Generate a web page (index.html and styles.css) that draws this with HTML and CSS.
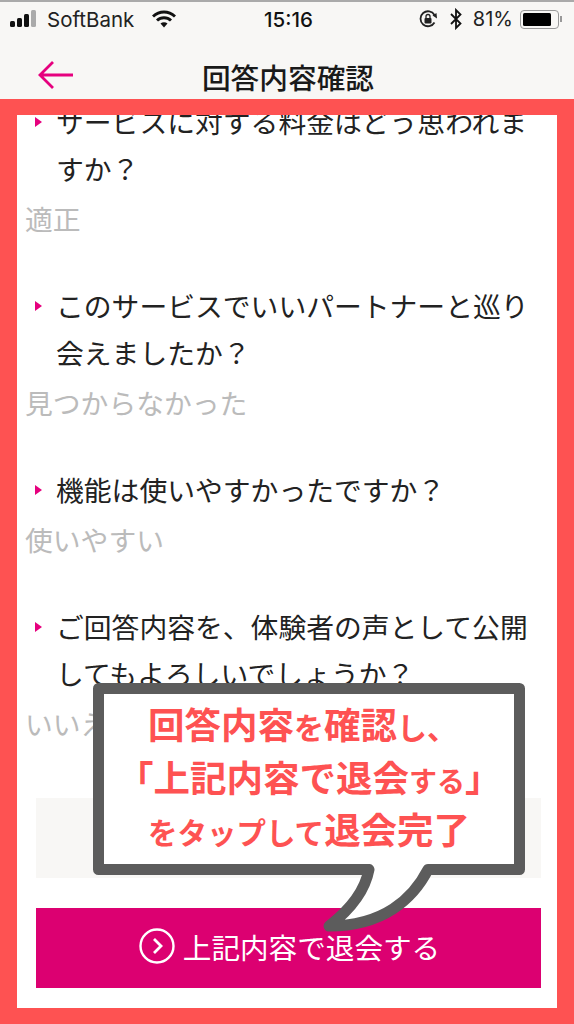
FILE: index.html
```html
<!DOCTYPE html>
<html lang="ja">
<head>
<meta charset="utf-8">
<title>回答内容確認</title>
<link rel="stylesheet" href="styles.css">
</head>
<body>
<div class="page">
  <div class="status">
    <div class="status-left">
      <svg class="signal" viewBox="0 0 28 20" width="28" height="20"><rect x="0" y="12" width="5" height="6" rx="1.5" fill="#111"/><rect x="7" y="9" width="5" height="9" rx="1.5" fill="#111"/><rect x="14" y="5" width="5" height="13" rx="1.5" fill="#111"/><rect x="21" y="1" width="5" height="17" rx="1.5" fill="#aaa"/></svg>
      <span class="carrier">SoftBank</span>
      <svg class="wifi" viewBox="0 0 24 18" width="24" height="18"><path d="M1 6.5C7.5 .5 16.500 .5 23 6.500" fill="none" stroke="#111" stroke-width="3"/><path d="M5 10.500C9 6.800 15 6.800 19 10.500" fill="none" stroke="#111" stroke-width="3"/><path d="M8.500 13.500 12 17.500 15.500 13.500C13.500 11.800 10.500 11.800 8.500 13.500Z" fill="#111"/></svg>
    </div>
    <span class="time">15:16</span>
    <div class="status-right">
      <svg class="lock" viewBox="0 0 20 20" width="20" height="20"><path d="M16.500 13.500A7.500 7.500 0 1 1 16.500 6" fill="none" stroke="#222" stroke-width="1.800"/><path d="M14.500 6.500 19 9.500 18.500 4Z" fill="#222"/><rect x="6.500" y="9" width="7" height="5.500" rx="1" fill="#222"/><path d="M8 9.500V7.500a2 2 0 0 1 4 0V9.500" fill="none" stroke="#222" stroke-width="1.300"/></svg>
      <svg class="bt" viewBox="0 0 14 22" width="14" height="22"><path d="M2 6 11.500 15.500 7 20V2L11.500 6.500 2 16" fill="none" stroke="#111" stroke-width="1.800"/></svg>
      <span class="pct">81%</span>
      <div class="battery"><div class="battery-fill"></div></div>
      <div class="battery-cap"></div>
    </div>
  </div>
  <header class="nav">
    <svg class="back" viewBox="0 0 36 30" width="36" height="30"><path d="M35 15H2M15 2 2 15 15 28" fill="none" stroke="#e6007e" stroke-width="2.800"/></svg>
    <h1 class="title">回答内容確認</h1>
  </header>
  <main class="frame">
    <div class="scroll">
      <section class="qa">
        <p class="q">サービスに対する料金はどう思われますか？</p>
        <p class="a">適正</p>
      </section>
      <section class="qa">
        <p class="q">このサービスでいいパートナーと巡り会えましたか？</p>
        <p class="a">見つからなかった</p>
      </section>
      <section class="qa">
        <p class="q">機能は使いやすかったですか？</p>
        <p class="a">使いやすい</p>
      </section>
      <section class="qa">
        <p class="q">ご回答内容を、体験者の声として公開してもよろしいでしょうか？</p>
        <p class="a">いいえ</p>
      </section>
    </div>
    <div class="actions">
      <div class="note"></div>
      <button class="submit" type="button">
        <svg class="go" viewBox="0 0 36 36" width="36" height="36"><circle cx="18" cy="18" r="16.500" fill="none" stroke="#fff" stroke-width="2.400"/><path d="M15 11 22 18 15 25" fill="none" stroke="#fff" stroke-width="2.800"/></svg>
        <span>上記内容で退会する</span>
      </button>
    </div>
  </main>
  <aside class="callout">
    <svg class="bubble" viewBox="0 0 432 250" width="432" height="250"><path d="M5.500 5.500H426.500V186.500H335C320 216 290 243 236 243C258 226 272 208 276 186.500H5.500Z" fill="#fff" stroke="#5c5c5c" stroke-width="11" stroke-linejoin="round"/></svg>
    <div class="callout-text">
      <p class="c1">回答内容<small>を</small>確認<small>し、</small></p>
      <p class="c2">「上記内容で退会<small>する</small>」</p>
      <p class="c3"><small>をタップして</small>退会完了</p>
    </div>
  </aside>
</div>
</body>
</html>
```
FILE: styles.css
```css
* { box-sizing: border-box; }
html, body { margin: 0; padding: 0; }
body { font-family: "Noto Sans CJK JP", "Noto Sans", sans-serif; background: #f8f7f5; }
p, h1 { margin: 0; }
.page { position: relative; width: 574px; height: 1024px; display: flex; flex-direction: column; overflow: hidden; }

.status { height: 36px; flex: none; border-top: 2px solid #aaa; padding: 0 12px 0 10px; display: flex; align-items: center; justify-content: space-between; position: relative; font-family: Inter, "Liberation Sans", sans-serif; font-size: 20px; color: #222; }
.status-left, .status-right { display: flex; align-items: center; }
.carrier { margin-left: 9px; width: 91px; font-size: 20.500px; }
.wifi { margin-left: 14px; }
.time { position: absolute; left: 264px; font-weight: 500; font-size: 20.500px; color: #111; }
.bt { margin-left: 11px; }
.pct { margin-left: 10px; font-size: 20px; }
.battery { margin-left: 7px; width: 39px; height: 19px; border: 1.500px solid #999; border-radius: 4px; padding: 2px; }
.battery-fill { width: 28px; height: 100%; background: #000; border-radius: 1.500px; }
.battery-cap { width: 2px; height: 6px; background: #999; margin-left: 1px; }

.nav { height: 63px; flex: none; position: relative; display: flex; align-items: center; justify-content: center; padding-top: 20px; }
.back { position: absolute; left: 38px; top: 24px; }
.title { font-size: 28.700px; font-weight: 500; color: #1a1a1a; line-height: 1.2; margin-left: 2px; }

.frame { flex: 1; min-height: 0; border: solid #fe5252; border-width: 16px 17px; background: #fff; overflow: hidden; display: flex; flex-direction: column; }
.scroll { margin-top: -17px; padding: 0 8px; flex: none; }
.qa { padding-bottom: 40px; }
.q { position: relative; padding-left: 31px; font-size: 27.800px; line-height: 47px; color: #222; }
.q::before { content: ""; position: absolute; left: 10px; top: 19px; border-style: solid; border-width: 5px 0 5px 7px; border-color: transparent transparent transparent #e6007e; }
.a { margin-top: 3px; font-size: 27.800px; line-height: 47px; color: #bbb; }

.actions { padding: 0 16px 20px 19px; margin-top: auto; }
.note { height: 80px; background: #f8f7f5; margin-bottom: 30px; }
.submit { width: 100%; height: 80px; padding: 0 0 4px 2px; border: 0; background: #dc0071; color: #fff; display: flex; align-items: center; justify-content: center; gap: 8px; font-family: inherit; font-size: 28.600px; font-weight: 400; }

.callout { position: absolute; left: 93px; top: 683px; width: 432px; height: 250px; }
.bubble { position: absolute; left: 0; top: 0; }
.callout-text { position: relative; padding-top: 15px; color: #fe5252; font-weight: 700; font-size: 36.500px; line-height: 52px; white-space: nowrap; letter-spacing: 0; }
.callout-text p { height: 52.500px; }
.callout-text small { font-size: 30px; line-height: 1; }
.c1 { padding-left: 55px; }
.c2 { padding-left: 24px; }
.c2 small { font-size: 28px; }
.c3 { padding-left: 55px; }
.c3 small { font-size: 29.500px; }
```
